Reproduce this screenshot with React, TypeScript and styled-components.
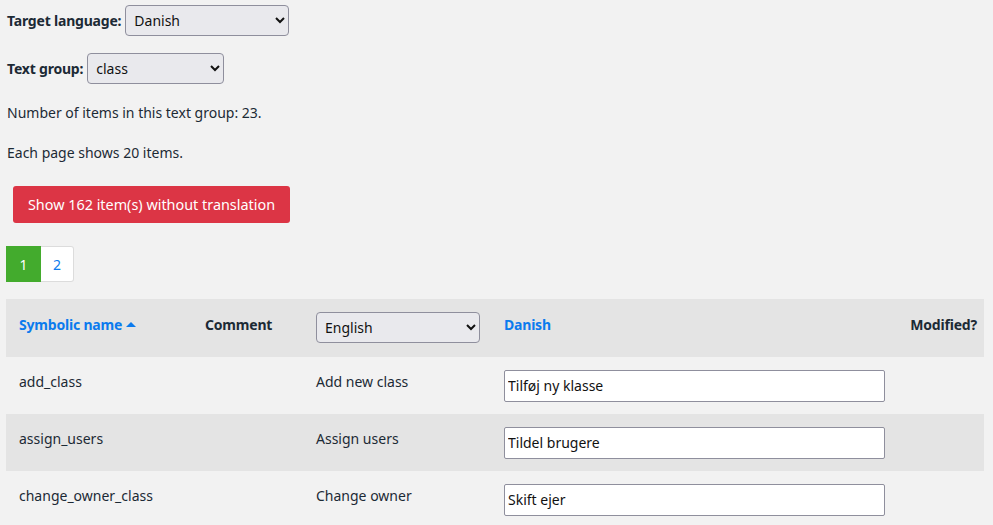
import React from "react";
import styled, { createGlobalStyle } from "styled-components";

const Global = createGlobalStyle`
  html, body { margin: 0; padding: 0; background: #f2f2f2; }
  body {
    font-family: "Noto Sans", "Open Sans", sans-serif;
    font-size: 14px;
    color: #1c2a35;
  }
`;

const Page = styled.div`
  padding: 5px 9px 0 6px;
`;

const FieldRow = styled.div`
  display: flex;
  align-items: center;
  gap: 4px;
  height: 31px;
  margin-bottom: 17px;
  padding-left: 1px;
`;

const Label = styled.label`
  font-weight: 700;
  letter-spacing: -0.2px;
`;

const Select = styled.select<{ $w: number }>`
  width: ${(p) => p.$w}px;
  height: 31px;
  font-family: "Noto Sans", sans-serif;
  font-size: 14px;
  color: #111;
  background: #e9e9ed;
  border: 1px solid #8f8f9d;
  border-radius: 4px;
  padding: 0 4px;
`;

const Para = styled.p`
  margin: 0 0 18px 1px;
  line-height: 22px;
  position: relative;
  top: 1px;
`;

const RedButton = styled.button`
  margin: 5px 0 0 7px;
  width: 277px;
  height: 37px;
  background: #dc3545;
  color: #fff;
  border: none;
  border-radius: 3px;
  font-family: "Noto Sans", sans-serif;
  font-size: 14.4px;
  padding-top: 1px;
`;

const Pager = styled.div`
  display: flex;
  margin: 23px 0 17px 0;
`;

const PageBtn = styled.a<{ $active?: boolean }>`
  width: ${(p) => (p.$active ? 35 : 33)}px;
  height: 36px;
  box-sizing: border-box;
  display: flex;
  align-items: center;
  justify-content: center;
  font-size: 14px;
  background: ${(p) => (p.$active ? "#43ab2d" : "#fff")};
  color: ${(p) => (p.$active ? "#fff" : "#0b7bee")};
  border: ${(p) => (p.$active ? "none" : "1px solid #dcdcdc")};
  border-left: none;
  border-radius: ${(p) => (p.$active ? "0" : "0 3px 3px 0")};
`;

const Table = styled.table`
  width: 978px;
  border-collapse: collapse;
  table-layout: fixed;
`;

const Row = styled.tr<{ $shade?: boolean }>`
  background: ${(p) => (p.$shade ? "#e4e4e4" : "#f2f2f2")};
`;

const Th = styled.th<{ $w: number; $link?: boolean; $right?: boolean }>`
  width: ${(p) => p.$w}px;
  height: 58px;
  padding: 0 7px 8px 13px;
  text-align: ${(p) => (p.$right ? "right" : "left")};
  font-weight: 700;
  letter-spacing: -0.2px;
  color: ${(p) => (p.$link ? "#0b7bee" : "#1c2a35")};
  vertical-align: middle;
  box-sizing: border-box;
`;

const ThSelect = styled.th<{ $w: number }>`
  width: ${(p) => p.$w}px;
  box-sizing: border-box;
  padding: 0 0 2px 13px;
  text-align: left;
  vertical-align: middle;
`;

const Td = styled.td`
  height: 57px;
  padding: 0 7px 8px 13px;
  vertical-align: middle;
  box-sizing: border-box;
`;

const TdInput = styled.td`
  height: 57px;
  padding: 0 0 0 13px;
  vertical-align: middle;
  box-sizing: border-box;
`;

const TextInput = styled.input`
  width: 381px;
  height: 32px;
  box-sizing: border-box;
  background: #fff;
  border: 1px solid #8f8f9d;
  border-radius: 2px;
  padding: 0 3px;
  font-family: "Noto Sans", sans-serif;
  font-size: 14px;
  color: #111;
`;

const Caret = styled.span`
  display: inline-block;
  width: 0;
  height: 0;
  margin-left: 4px;
  border-left: 5px solid transparent;
  border-right: 5px solid transparent;
  border-bottom: 5px solid #0b7bee;
  vertical-align: 3px;
`;

const rows = [
  { name: "add_class", en: "Add new class", da: "Tilføj ny klasse" },
  { name: "assign_users", en: "Assign users", da: "Tildel brugere" },
  { name: "change_owner_class", en: "Change owner", da: "Skift ejer" },
];

export default function App() {
  return (
    <Page>
      <Global />
      <FieldRow>
        <Label>Target language:</Label>
        <Select $w={164} defaultValue="Danish">
          <option>Danish</option>
          <option>English</option>
        </Select>
      </FieldRow>
      <FieldRow>
        <Label>Text group:</Label>
        <Select $w={137} defaultValue="class">
          <option>class</option>
        </Select>
      </FieldRow>
      <Para>Number of items in this text group: 23.</Para>
      <Para>Each page shows 20 items.</Para>
      <RedButton>Show 162 item(s) without translation</RedButton>
      <Pager>
        <PageBtn $active>1</PageBtn>
        <PageBtn>2</PageBtn>
      </Pager>
      <Table>
        <thead>
          <Row $shade>
            <Th $w={186} $link>
              Symbolic name<Caret />
            </Th>
            <Th $w={111}>Comment</Th>
            <ThSelect $w={188}>
              <Select $w={164} defaultValue="English">
                <option>English</option>
              </Select>
            </ThSelect>
            <Th $w={406} $link>Danish</Th>
            <Th $w={87} $right>Modified?</Th>
          </Row>
        </thead>
        <tbody>
          {rows.map((r, i) => (
            <Row key={r.name} $shade={i % 2 === 1}>
              <Td>{r.name}</Td>
              <Td />
              <Td>{r.en}</Td>
              <TdInput>
                <TextInput defaultValue={r.da} />
              </TdInput>
              <Td />
            </Row>
          ))}
        </tbody>
      </Table>
    </Page>
  );
}
